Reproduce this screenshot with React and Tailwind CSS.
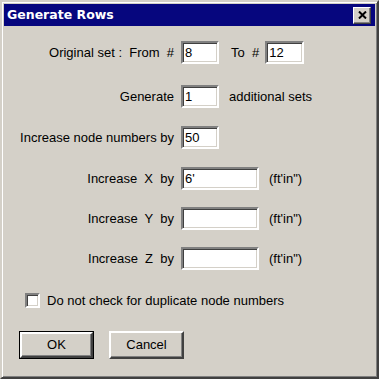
import React from "react";

const sunken =
  "bg-white border-2 border-t-[#808080] border-l-[#808080] border-b-white border-r-white shadow-[inset_1px_1px_0_#404040,inset_-1px_-1px_0_#d4d0c8]";

const Field = ({ value, width = "w-[38px]" }) => (
  <div className={`${sunken} ${width} h-[23px] flex items-center pl-[2px] text-[13px] text-black`}>
    {value}
  </div>
);

const Row = ({ label, children, className = "" }) => (
  <div className={`flex items-center ${className}`}>
    <div className="w-[177px] text-right pr-[7px] whitespace-pre">{label}</div>
    {children}
  </div>
);

const Button = ({ label, primary }) => (
  <div
    className={`w-[75px] h-[28px] flex items-center justify-center ${
      primary ? "border border-black" : ""
    }`}
  >
    <div className="w-full h-full bg-[#d4d0c8] border-2 border-t-white border-l-white border-b-[#404040] border-r-[#404040] shadow-[inset_-1px_-1px_0_#808080] flex items-center justify-center">
      {label}
    </div>
  </div>
);

const GenerateRowsDialog = () => {
  return (
    <div className="w-[379px] h-[379px] bg-[#d4d0c8] border-2 border-t-[#d4d0c8] border-l-[#d4d0c8] border-b-[#404040] border-r-[#404040] shadow-[inset_1px_1px_0_#fff,inset_-1px_-1px_0_#808080] p-[2px] flex flex-col">
      {/* title bar */}
      <div className="h-[22px] bg-[#06067e] flex items-center justify-between pl-[3px] pr-[4px]">
        <span className="text-white font-bold text-[12.5px] font-['DejaVu_Sans',sans-serif]">Generate Rows</span>
        <div className="w-[18px] h-[17px] bg-[#d4d0c8] border border-t-white border-l-white border-b-[#404040] border-r-[#404040] shadow-[inset_-1px_-1px_0_#808080] flex items-center justify-center">
          <svg width="9" height="8" viewBox="0 0 9 8">
            <path d="M1 0.5 L8 7.5 M8 0.5 L1 7.5" stroke="black" strokeWidth="2" />
          </svg>
        </div>
      </div>

      <div className="flex-1 text-[13px] text-black font-['Liberation_Sans',Arial,sans-serif] pt-[15px]">
        <Row label="Original set :  From  #">
          <Field value="8" />
          <span className="ml-[12px] mr-[6px] whitespace-pre">To  #</span>
          <Field value="12" width="w-[39px]" />
        </Row>
        <Row label="Generate" className="mt-[21px]">
          <Field value="1" />
          <span className="ml-[10px]">additional sets</span>
        </Row>
        <Row label="Increase node numbers by" className="mt-[18px]">
          <Field value="50" />
        </Row>
        <Row label={"Increase  X  by"} className="mt-[18px]">
          <Field value="6'" width="w-[78px]" />
          <span className="ml-[10px]">(ft'in")</span>
        </Row>
        <Row label={"Increase  Y  by"} className="mt-[17px]">
          <Field value="" width="w-[78px]" />
          <span className="ml-[10px]">(ft'in")</span>
        </Row>
        <Row label={"Increase  Z  by"} className="mt-[17px]">
          <Field value="" width="w-[78px]" />
          <span className="ml-[10px]">(ft'in")</span>
        </Row>

        <div className="flex items-center mt-[21px] ml-[21px]">
          <div className={`${sunken} w-[15px] h-[15px]`} />
          <span className="ml-[7px]">Do not check for duplicate node numbers</span>
        </div>

        <div className="flex items-center gap-[15px] mt-[20px] ml-[15px]">
          <Button label="OK" primary />
          <Button label="Cancel" />
        </div>
      </div>
    </div>
  );
};

export default function App() {
  return <GenerateRowsDialog />;
}
